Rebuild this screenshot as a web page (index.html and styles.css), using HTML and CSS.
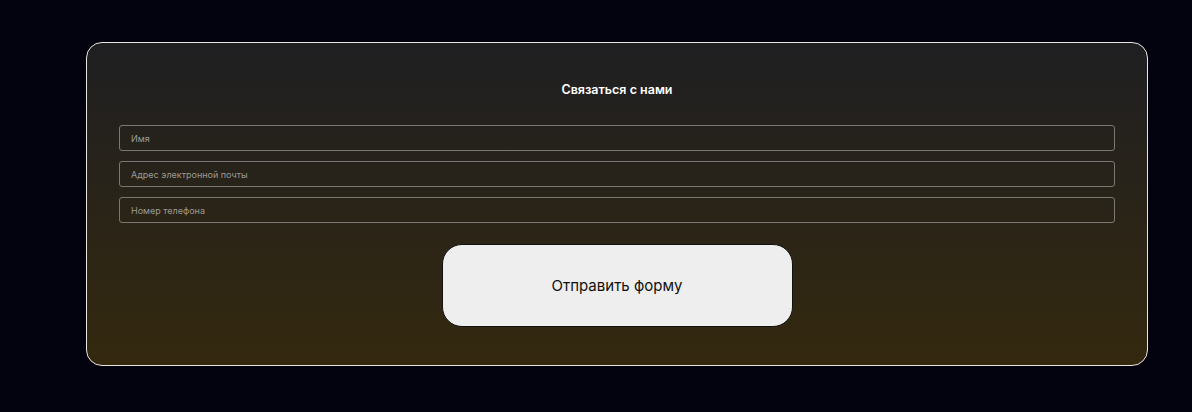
FILE: index.html
```html
<!DOCTYPE html>
<html lang="ru">
<head>
<meta charset="utf-8">
<title>Связаться с нами</title>
<link rel="stylesheet" href="styles.css">
</head>
<body>
<main class="page">
  <form class="card">
    <h2 class="title">Связаться с нами</h2>
    <div class="fields">
      <input class="field" type="text" placeholder="Имя">
      <input class="field" type="email" placeholder="Адрес электронной почты">
      <input class="field" type="tel" placeholder="Номер телефона">
    </div>
    <button class="submit" type="button">Отправить форму</button>
  </form>
</main>
</body>
</html>
```
FILE: styles.css
```css
* { box-sizing: border-box; }
html, body {
  margin: 0;
  padding: 0;
  background: #02030f;
  font-family: Inter, "Noto Sans", sans-serif;
}
.page {
  padding: 42px 44px 46px 86px;
}
.card {
  display: flex;
  flex-direction: column;
  align-items: center;
  padding: 39px 32px 38px;
  border: 1px solid #e8e6df;
  border-radius: 16px;
  background: linear-gradient(180deg, #1f1f22 0%, #34290f 100%);
}
.title {
  margin: 0;
  font-size: 12.5px;
  font-weight: 600;
  line-height: 16px;
  color: #ffffff;
}
.fields {
  display: flex;
  flex-direction: column;
  gap: 10px;
  width: 100%;
  margin-top: 27px;
}
.field {
  width: 100%;
  height: 26px;
  padding: 0 11px;
  border: 1px solid #7a7874;
  border-radius: 3px;
  background: transparent;
  font-family: Inter, "Noto Sans", sans-serif;
  font-size: 9px;
  color: #ddd;
  outline: none;
}
.field::placeholder { color: #9c9a95; }
.submit {
  flex: none;
  width: 351px;
  height: 83px;
  margin-top: 21px;
  border: 1px solid #111;
  border-radius: 20px;
  background: #eeeeee;
  font-family: Inter, "Noto Sans", sans-serif;
  font-size: 15px;
  font-weight: 400;
  color: #111;
  cursor: pointer;
}
```
